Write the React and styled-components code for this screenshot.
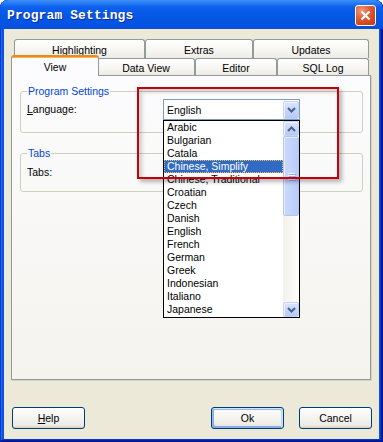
import React from "react";
import styled, { createGlobalStyle, css } from "styled-components";

const languages = [
  "Arabic",
  "Bulgarian",
  "Catala",
  "Chinese, Simplify",
  "Chinese, Traditional",
  "Croatian",
  "Czech",
  "Danish",
  "English",
  "French",
  "German",
  "Greek",
  "Indonesian",
  "Italiano",
  "Japanese",
];

const topTabs = [
  { label: "Highlighting", w: 131 },
  { label: "Extras", w: 108 },
  { label: "Updates", w: 116 },
];

const bottomTabs = [
  { label: "View", w: 84, active: true },
  { label: "Data View", w: 98 },
  { label: "Editor", w: 82 },
  { label: "SQL Log", w: 92 },
];

const GlobalStyle = createGlobalStyle`
  html, body {
    margin: 0;
    padding: 0;
    background: #fff;
  }
  body {
    font-family: "Liberation Sans", Arial, sans-serif;
    font-size: 10.5px;
    color: #000;
  }
  * {
    box-sizing: border-box;
  }
`;

const Window = styled.div`
  position: relative;
  width: 383px;
  height: 442px;
  display: flex;
  flex-direction: column;
  background: #0855dd;
  border-radius: 8px 8px 0 0;
  overflow: hidden;
  box-shadow: inset -1px -1px #00138c, inset 1px 1px #0831d9,
    inset -2px -2px #001ea0, inset 2px 2px #166aee, inset -3px -3px #003bda,
    inset 3px 3px #0855dd;
`;

const TitleBar = styled.div`
  flex: none;
  height: 29px;
  display: flex;
  align-items: center;
  justify-content: space-between;
  padding: 0 7px 0 7px;
  border-radius: 8px 8px 0 0;
  background: linear-gradient(
    180deg,
    #3d8ff9 0,
    #2a7cf4 3px,
    #0b60ec 7px,
    #0658e6 50%,
    #0553e2 85%,
    #0a4edb 100%
  );
`;

const Title = styled.span`
  font-family: "Liberation Mono", "DejaVu Sans Mono", monospace;
  font-weight: bold;
  font-size: 13px;
  color: #fff;
  text-shadow: 1px 1px #0c2a9c;
  letter-spacing: 0.1px;
  margin-top: 1px;
`;

const CloseButton = styled.div`
  width: 21px;
  height: 21px;
  margin-top: 2px;
  border: 1px solid #fff;
  border-radius: 3px;
  display: flex;
  align-items: center;
  justify-content: center;
  background: radial-gradient(
    circle at 30% 25%,
    #f29a7a 0,
    #e0603a 40%,
    #d2461c 70%,
    #c23a12 100%
  );
`;

const Client = styled.div`
  flex: 1;
  margin: 0 4px 3px 4px;
  background: #ece9d8;
  padding: 10px 8px 0 7px;
  display: flex;
  flex-direction: column;
`;

const TabRows = styled.div`
  display: flex;
  flex-direction: column;
  padding-left: 2px;
`;

const TabRow = styled.div`
  display: flex;
  height: ${(p) => p.$h}px;
  padding-left: ${(p) => p.$inset || 0}px;
`;

const Tab = styled.div`
  flex: none;
  width: ${(p) => p.$w}px;
  height: 100%;
  display: flex;
  align-items: center;
  justify-content: center;
  border: 1px solid #919b9c;
  border-bottom: none;
  border-radius: 3px 3px 0 0;
  background: linear-gradient(180deg, #fff 0, #f6f5f1 60%, #ecebe5 100%);
  padding-top: 1px;

  ${(p) =>
    p.$active &&
    css`
      position: relative;
      z-index: 2;
      width: ${p.$w + 4}px;
      height: calc(100% + 4px);
      margin: -3px -2px 0 -2px;
      padding-top: 0;
      background: #fcfcfe;
      border-top: 2px solid #ffc83c;
      box-shadow: inset 0 1px #f7b63d;
      border-top-color: #e68b2c;
    `}
`;

const Panel = styled.div`
  height: 305px;
  border: 1px solid #919b9c;
  background: linear-gradient(180deg, #fcfcfe 0, #f4f3ee 100%);
  box-shadow: 1px 1px 0 #d6d3c4;
  padding: 9px 7px 0 8px;
  display: flex;
  flex-direction: column;
`;

const Group = styled.fieldset`
  margin: ${(p) => p.$mt || 0}px 0 0 0;
  padding: ${(p) => p.$pt}px 6px 12px 6px;
  border: 1px solid #d0d0bf;
  border-radius: 3px;
  min-width: 0;
`;

const Legend = styled.legend`
  padding: 0 1px;
  line-height: 13px;
  color: #0046d5;
`;

const FieldRow = styled.div`
  display: grid;
  grid-template-columns: 136px 137px;
  align-items: center;
`;

const Label = styled.span`
  line-height: 13px;
`;

const ComboWrap = styled.div`
  position: relative;
  width: 137px;
  height: 21px;
`;

const ComboBox = styled.div`
  height: 100%;
  border: 1px solid #7f9db9;
  background: #fff;
  display: flex;
  align-items: center;
  justify-content: space-between;
  padding: 0 0 0 3px;
`;

const ArrowButton = styled.div`
  flex: none;
  width: ${(p) => p.$w || 16}px;
  height: ${(p) => p.$h || 17}px;
  border: 1px solid #c3d3fd;
  border-radius: 2px;
  display: flex;
  align-items: center;
  justify-content: center;
  background: linear-gradient(180deg, #dbe6fd 0, #c6d6fc 50%, #b6c9f7 100%);
  box-shadow: inset 1px 1px #eef3fe;
`;

const DropList = styled.div`
  position: absolute;
  top: 100%;
  left: 0;
  width: 137px;
  height: 198px;
  border: 1px solid #000;
  background: #fff;
  display: flex;
  z-index: 5;
`;

const Items = styled.div`
  flex: 1;
  display: flex;
  flex-direction: column;
  padding-left: 0;
`;

const Item = styled.div`
  height: 13px;
  line-height: 13px;
  padding-left: 3px;
  white-space: nowrap;
  ${(p) =>
    p.$selected &&
    css`
      background: #316ac5;
      color: #fff;
      outline: 1px dotted #f2c14e;
      outline-offset: -1px;
    `}
`;

const ScrollBar = styled.div`
  flex: none;
  width: 16px;
  display: flex;
  flex-direction: column;
  background: linear-gradient(90deg, #f3f1ec 0, #fefefb 100%);
`;

const Track = styled.div`
  flex: 1;
`;

const Thumb = styled.div`
  height: 80px;
  border: 1px solid #b2c6f5;
  border-radius: 2px;
  background: linear-gradient(90deg, #c9d8fc 0, #c2d3fc 50%, #b9cbf9 100%);
  box-shadow: inset 1px 1px #e6eefe;
  display: flex;
  flex-direction: column;
  align-items: center;
  justify-content: center;
  gap: 1px;
`;

const Grip = styled.span`
  width: 7px;
  height: 1px;
  background: #eef4fe;
  box-shadow: 1px 1px #8cb0f8;
`;

const ButtonRow = styled.div`
  display: flex;
  justify-content: space-between;
  margin: 27px -1px 0 1px;
`;

const ButtonGroup = styled.div`
  display: flex;
  gap: 15px;
`;

const Button = styled.button`
  width: 73px;
  height: 22px;
  padding: 0;
  border: 1px solid #003c74;
  border-radius: 3px;
  background: linear-gradient(180deg, #fff 0, #f4f3ee 50%, #ecebe6 86%, #d6d0c5 100%);
  font-family: "Liberation Sans", Arial, sans-serif;
  font-size: 10.5px;
  color: #000;
  ${(p) =>
    p.$default &&
    css`
      box-shadow: inset -1px 1px #cee7ff, inset 1px 2px #98b8ea,
        inset -2px 2px #bcd4f6, inset 1px -1px #89ade4,
        inset 2px -2px #89ade4;
    `}
`;

const Annotation = styled.div`
  position: absolute;
  left: 137px;
  top: 87px;
  width: 202px;
  height: 92px;
  border: 2px solid #c4000a;
  box-shadow: 3px 3px 4px rgba(0, 0, 0, 0.28),
    inset 3px 3px 4px rgba(0, 0, 0, 0.18);
  z-index: 10;
  pointer-events: none;
`;

const Chevron = ({ up }) => (
  <svg width="9" height="6" viewBox="0 0 9 6">
    <polyline
      points={up ? "1,5 4.5,1.5 8,5" : "1,1 4.5,4.5 8,1"}
      fill="none"
      stroke="#4d6185"
      strokeWidth="2"
    />
  </svg>
);

const CloseIcon = () => (
  <svg width="11" height="11" viewBox="0 0 11 11">
    <path d="M1.5 1.5 L9.5 9.5 M9.5 1.5 L1.5 9.5" stroke="#fff" strokeWidth="2.2" />
  </svg>
);

export default function App() {
  return (
    <>
      <GlobalStyle />
      <Window>
        <TitleBar>
          <Title>Program Settings</Title>
          <CloseButton>
            <CloseIcon />
          </CloseButton>
        </TitleBar>

        <Client>
          <TabRows>
            <TabRow $h={19} $inset={1}>
              {topTabs.map((t) => (
                <Tab key={t.label} $w={t.w}>
                  {t.label}
                </Tab>
              ))}
            </TabRow>
            <TabRow $h={17}>
              {bottomTabs.map((t) => (
                <Tab key={t.label} $w={t.w} $active={t.active}>
                  {t.label}
                </Tab>
              ))}
            </TabRow>
          </TabRows>

          <Panel>
            <Group $pt={1}>
              <Legend>Program Settings</Legend>
              <FieldRow>
                <Label>
                  <u>L</u>anguage:
                </Label>
                <ComboWrap>
                  <ComboBox>
                    <span>English</span>
                    <ArrowButton $w={16} $h={18}>
                      <Chevron />
                    </ArrowButton>
                  </ComboBox>
                  <DropList>
                    <Items>
                      {languages.map((l) => (
                        <Item key={l} $selected={l === "Chinese, Simplify"}>
                          {l}
                        </Item>
                      ))}
                    </Items>
                    <ScrollBar>
                      <ArrowButton $w={16} $h={15}>
                        <Chevron up />
                      </ArrowButton>
                      <Thumb>
                        <Grip />
                        <Grip />
                        <Grip />
                        <Grip />
                      </Thumb>
                      <Track />
                      <ArrowButton $w={16} $h={15}>
                        <Chevron />
                      </ArrowButton>
                    </ScrollBar>
                  </DropList>
                </ComboWrap>
              </FieldRow>
            </Group>

            <Group $mt={14} $pt={6}>
              <Legend>Tabs</Legend>
              <FieldRow>
                <Label>Tabs:</Label>
              </FieldRow>
            </Group>
          </Panel>

          <ButtonRow>
            <Button>
              <u>H</u>elp
            </Button>
            <ButtonGroup>
              <Button $default>Ok</Button>
              <Button>Cancel</Button>
            </ButtonGroup>
          </ButtonRow>
        </Client>

        <Annotation />
      </Window>
    </>
  );
}
